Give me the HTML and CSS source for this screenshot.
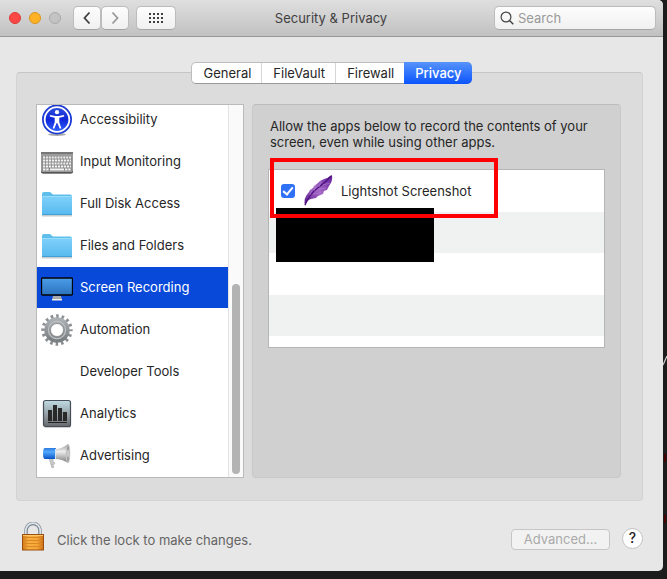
FILE: index.html
```html
<!DOCTYPE html>
<html lang="en">
<head>
    <meta charset="UTF-8">
    <meta name="viewport" content="width=device-width, initial-scale=1.0">
    <title>Security &amp; Privacy</title>
    <link rel="stylesheet" href="styles.css">
</head>
<body>
    <main class="window">
        <header class="titlebar">
            <div class="controls">
                <div class="lights">
                    <button class="light close" aria-label="Close"></button>
                    <button class="light minimize" aria-label="Minimize"></button>
                    <button class="light" aria-label="Zoom" disabled></button>
                </div>
                <div class="history">
                    <button class="tool" aria-label="Back">
                        <svg width="8" height="14" viewBox="0 0 8 14"><path d="M6.5 1.5L1.5 7l5 5.5" fill="none" stroke="#3f3f3f" stroke-width="1.8"/></svg>
                    </button>
                    <button class="tool" aria-label="Forward">
                        <svg width="8" height="14" viewBox="0 0 8 14"><path d="M1.5 1.5L6.5 7l-5 5.5" fill="none" stroke="#999" stroke-width="1.8"/></svg>
                    </button>
                </div>
                <button class="tool show-all" aria-label="Show All">
                    <svg width="14" height="10" viewBox="0 0 14 10"><path d="M0 1h14M0 5h14M0 9h14" stroke="#3f3f3f" stroke-width="2" stroke-dasharray="2 2"/></svg>
                </button>
            </div>
            <h1>Security &amp; Privacy</h1>
            <label class="search">
                <svg width="14" height="14" viewBox="0 0 14 14" fill="none" stroke="#444" stroke-width="1.2"><circle cx="6" cy="6" r="4.9"/><path d="M9.5 9.5l3.8 3.8" stroke-width="1.5"/></svg>
                <input type="text" placeholder="Search" aria-label="Search">
            </label>
        </header>

        <nav class="tabs">
            <button>General</button>
            <button>FileVault</button>
            <button>Firewall</button>
            <button class="active">Privacy</button>
        </nav>

        <section class="panel">
            <div class="sidebar">
                <ul class="services">
                    <li>
                        <svg width="32" height="32" viewBox="0 0 32 32">
                            <defs><linearGradient id="blue" x2="0" y2="1"><stop offset="0" stop-color="#2f50dc"/><stop offset=".5" stop-color="#1026d8"/><stop offset="1" stop-color="#2f63ff"/></linearGradient></defs>
                            <ellipse cx="16" cy="30.500" rx="9" ry="1.500" fill="#aaa"/>
                            <circle cx="16" cy="15.500" r="15" fill="#1c39d2"/>
                            <circle cx="16" cy="15.500" r="12.300" fill="url(#blue)" stroke="#fff" stroke-width="1.800"/>
                            <circle cx="16" cy="8.200" r="2.100" fill="#fff"/>
                            <path d="M9 11l5.200 1h3.600l5.200-1 .2 1.400-4.900 1.400v4.400l2 6-1.500.6L16.300 19h-.6l-2.500 5.800-1.500-.6 2-6v-4.400l-4.900-1.400z" fill="#fff"/>
                        </svg>
                        Accessibility
                    </li>
                    <li>
                        <svg width="32" height="32" viewBox="0 0 32 32">
                            <path d="M0 7h32v18.500q0 2-2 2H2q-2 0-2-2z" fill="#151515"/>
                            <path d="M0 6h32v18q0 2.500-1.500 2.500h-29Q0 26.500 0 24z" fill="#9c9c9c"/>
                            <path d="M0 6h32v2H0z" fill="#777"/>
                            <path d="M1 10h30v15H1z" fill="#8c8c8c"/>
                            <path d="M2 11.500h28M2 17.500h28" stroke="#f2f2f2" stroke-width="2" stroke-dasharray="2 .9"/>
                            <path d="M2 14.500h28M2 20.500h28" stroke="#f2f2f2" stroke-width="2" stroke-dasharray="2.200 .8"/>
                            <path d="M2 23.500h6M24 23.500h6" stroke="#f2f2f2" stroke-width="2" stroke-dasharray="2.400 .8"/>
                            <path d="M9 23.500h14" stroke="#f2f2f2" stroke-width="2"/>
                        </svg>
                        Input Monitoring
                    </li>
                    <li>
                        <svg width="32" height="32" viewBox="0 0 32 32">
                            <defs><linearGradient id="folder" x2="0" y2="1"><stop offset="0" stop-color="#7fd0fa"/><stop offset="1" stop-color="#57b9ee"/></linearGradient></defs>
                            <path d="M1 27h30v1.500H1z" fill="#c5cdd2"/>
                            <path d="M1 26V6q0-2 2-2h6l3 2.500h17q2 0 2 2V26z" fill="#5fbfea"/>
                            <path d="M1 8.500h30V26q0 1-1 1H2q-1 0-1-1z" fill="url(#folder)"/>
                            <path d="M1.500 8.500h29" stroke="#96dcfc"/>
                            <path d="M1 26.500h30" stroke="#42a0d3"/>
                        </svg>
                        Full Disk Access
                    </li>
                    <li>
                        <svg width="32" height="32" viewBox="0 0 32 32">
                            <path d="M1 27h30v1.500H1z" fill="#c5cdd2"/>
                            <path d="M1 26V6q0-2 2-2h6l3 2.500h17q2 0 2 2V26z" fill="#5fbfea"/>
                            <path d="M1 8.500h30V26q0 1-1 1H2q-1 0-1-1z" fill="url(#folder)"/>
                            <path d="M1.500 8.500h29" stroke="#96dcfc"/>
                            <path d="M1 26.500h30" stroke="#42a0d3"/>
                        </svg>
                        Files and Folders
                    </li>
                    <li class="selected">
                        <svg width="32" height="32" viewBox="0 0 32 32">
                            <defs><linearGradient id="screen" x2="0" y2="1"><stop offset="0" stop-color="#4b9de9"/><stop offset="1" stop-color="#2c72bd"/></linearGradient></defs>
                            <path d="M12 24h8l1 4H11z" fill="#aaa"/>
                            <path d="M11 27h10v1.500H11z" fill="#ededed"/>
                            <rect x=".5" y="6" width="31" height="17" rx="1" fill="url(#screen)" stroke="#050505" stroke-width="1.300"/>
                        </svg>
                        Screen Recording
                    </li>
                    <li>
                        <svg width="32" height="32" viewBox="0 0 32 32">
                            <defs><linearGradient id="steel" x2="0" y2="1"><stop offset="0" stop-color="#a9aeb2"/><stop offset="1" stop-color="#7b8084"/></linearGradient></defs>
                            <circle cx="16" cy="16" r="13.700" fill="none" stroke="#8b8f93" stroke-width="4" stroke-dasharray="2.500 2.880" stroke-dashoffset="1.250"/>
                            <circle cx="16" cy="16" r="9.400" fill="none" stroke="url(#steel)" stroke-width="6.600"/>
                            <circle cx="16" cy="16" r="8.600" fill="none" stroke="#bfc2c5" stroke-width="1.200"/>
                            <circle cx="16" cy="16" r="6.500" fill="#fff" stroke="#888" stroke-width=".8"/>
                        </svg>
                        Automation
                    </li>
                    <li>
                        <span class="no-icon"></span>
                        Developer Tools
                    </li>
                    <li>
                        <svg width="32" height="32" viewBox="0 0 32 32">
                            <defs><linearGradient id="chart" x2="0" y2="1"><stop offset="0" stop-color="#bfdbe3"/><stop offset=".6" stop-color="#90999e"/><stop offset="1" stop-color="#66696b"/></linearGradient></defs>
                            <rect x="3" y="4" width="27" height="26" rx="2" fill="#ccc"/>
                            <rect x="2.500" y="2.500" width="27" height="26" rx="2" fill="url(#chart)" stroke="#464d59" stroke-width="1.200"/>
                            <path d="M7 12h4v11H7zM12 7h4v16h-4zM17 10h4v13h-4zM22 14h4v9h-4z" fill="#292929"/>
                            <path d="M7 24.500h19" stroke="#222"/>
                        </svg>
                        Analytics
                    </li>
                    <li>
                        <svg width="32" height="32" viewBox="0 0 32 32">
                            <defs>
                                <linearGradient id="horn" x2="0" y2="1"><stop offset="0" stop-color="#999"/><stop offset=".4" stop-color="#eee"/><stop offset="1" stop-color="#777"/></linearGradient>
                                <linearGradient id="grip" x2="0" y2="1"><stop offset="0" stop-color="#2b79dd"/><stop offset=".35" stop-color="#54aaff"/><stop offset="1" stop-color="#0754c5"/></linearGradient>
                            </defs>
                            <path d="M8 18h4v4l2 1-1 1.500-2-.5 2 3-2 1z" fill="#ccc" stroke="#aaa" stroke-width=".7"/>
                            <path d="M14 9q7 0 13-5v19q-6-4-13-4z" fill="url(#horn)"/>
                            <path d="M4 8h11v11H4q-2 0-2-5.500T4 8z" fill="url(#grip)"/>
                            <path d="M14.500 9v10" stroke="#d6e5f5"/>
                            <ellipse cx="27" cy="13.500" rx="1.800" ry="9.500" fill="#999" stroke="#ccc"/>
                            <ellipse cx="27" cy="13.500" rx="1" ry="4" fill="#ccc"/>
                        </svg>
                        Advertising
                    </li>
                </ul>
                <div class="scrollbar"><div class="thumb"></div></div>
            </div>

            <div class="details">
                <p>Allow the apps below to record the contents of your screen, even while using other apps.</p>
                <div class="apps">
                    <label class="app">
                        <input type="checkbox" checked>
                        <svg width="32" height="32" viewBox="0 0 32 32">
                            <defs><linearGradient id="feather" x1="0" y1="1" x2="1" y2="0"><stop offset="0" stop-color="#55138a"/><stop offset=".5" stop-color="#a66ac8"/><stop offset="1" stop-color="#5d1b99"/></linearGradient></defs>
                            <path d="M3 31Q1 23 7 17l1-2 3-2 1-2 4-3 2-2 4-2q4-1 8-4 1 6-3 11l-2 4-3 1-1 3-5 2-2 2-5 1q-4 1-6 7z" fill="url(#feather)"/>
                            <path d="M3 30Q8 18 17 12 24 7 29 1" fill="none" stroke="#4b107d" stroke-width="1.200"/>
                            <path d="M8 20l2-6M12 16l2-6M17 12l2-6M11 19l7-1M16 14l8-1M21 10l7-2" stroke="#b98ad3" stroke-width=".5"/>
                        </svg>
                        <span>Lightshot Screenshot</span>
                    </label>
                    <div class="redacted"></div>
                    <div class="highlight"></div>
                </div>
            </div>
        </section>

        <footer>
            <button class="lock" aria-label="Unlock">
                <svg width="24" height="30" viewBox="0 0 24 30">
                    <defs><linearGradient id="brass"><stop offset="0" stop-color="#d37714"/><stop offset=".3" stop-color="#f8ae40"/><stop offset=".7" stop-color="#f5a637"/><stop offset="1" stop-color="#c96a12"/></linearGradient></defs>
                    <path d="M5 13V8.500a7 7 0 0 1 14 0V13" fill="none" stroke="#7c8791" stroke-width="3.600"/>
                    <path d="M4.700 13V8.500a7.300 7.300 0 0 1 14.600 0V13" fill="none" stroke="#dce4ea" stroke-width="1.800"/>
                    <rect x="1.500" y="12.500" width="21" height="15.500" fill="url(#brass)" stroke="#9a4e10"/>
                    <path d="M2 15.500h20M2 18.500h20M2 21.500h20M2 24.500h20" stroke="#d98825"/>
                    <path d="M2 13.500h20" stroke="#ffc867"/>
                </svg>
            </button>
            <span class="hint">Click the lock to make changes.</span>
            <button class="advanced" disabled>Advanced...</button>
            <button class="help" aria-label="Help">?</button>
        </footer>
    </main>

    <!-- sliver of the window behind -->
    <div class="behind">
        <svg width="4" height="200" viewBox="0 0 4 200">
            <path d="M0 10l4-9" stroke="#ccc" stroke-width="1.200"/>
            <path d="M2 99v8M2 160v8" stroke="#400" stroke-width="2"/>
        </svg>
    </div>
</body>
</html>
```
FILE: styles.css
```css
* {
    box-sizing: border-box;
}

body {
    margin: 0;
    padding-bottom: 8px;
    display: flex;
    background: #1c1c1c;
    color: #262626;
    font-family: Inter, "Liberation Sans", sans-serif;
    font-size: 13px;
    line-height: 16px;
}

button,
input {
    margin: 0;
    padding: 0;
    font: inherit;
    color: inherit;
}

svg {
    display: block;
    flex: none;
}

.window {
    flex: 1;
    background: #e7e7e7;
    border-radius: 0 5px 5px 0;
    overflow: hidden;
}

/* title bar */
.titlebar {
    display: grid;
    grid-template-columns: 1fr auto 1fr;
    align-items: center;
    height: 37px;
    padding: 0 7px 0 6px;
    background: linear-gradient(#dfdfdf, #c1c1c1);
    border-bottom: 1px solid #989898;
}

.titlebar h1 {
    margin: 0;
    font-size: 13px;
    font-weight: 400;
    color: #404040;
}

.controls,
.lights,
.history {
    display: flex;
    align-items: center;
}

.lights {
    gap: 8px;
    padding: 0 12px 0 3px;
}

.light {
    width: 12px;
    height: 12px;
    border: 1px solid #aaa;
    border-radius: 50%;
    background: #c3c3c3;
}

.close {
    background: #fc4845;
    border-color: #df3834;
}

.minimize {
    background: #fdb124;
    border-color: #dc951c;
}

.history {
    margin-right: 7px;
}

.tool {
    display: flex;
    align-items: center;
    justify-content: center;
    width: 28px;
    height: 24px;
    border: 1px solid #bcbcbc;
    border-bottom-color: #a5a5a5;
    border-radius: 5px;
    background: linear-gradient(#fdfdfd, #f0f0f0);
}

.show-all {
    width: 40px;
}

.search {
    display: flex;
    align-items: center;
    justify-self: end;
    gap: 4px;
    width: 162px;
    height: 24px;
    padding: 0 5px;
    border: 1px solid #bcbcbc;
    border-bottom-color: #a5a5a5;
    border-radius: 5px;
    background: linear-gradient(#fdfdfd, #f0f0f0);
}

.search input {
    flex: 1;
    min-width: 0;
    border: 0;
    outline: 0;
    background: none;
}

.search input::placeholder {
    color: #999;
}

/* tabs */
.tabs {
    position: relative;
    display: flex;
    width: max-content;
    margin: 25px auto -12px;
    border: 1px solid #bdbdbd;
    border-bottom-color: #999;
    border-radius: 5px;
    background: #fff;
}

.tabs button {
    height: 20px;
    padding: 0 10px 0 11px;
    border: 0;
    border-right: 1px solid #d5d5d5;
    background: none;
}

.tabs .active {
    margin: -1px;
    height: 22px;
    border: 0;
    border-radius: 0 5px 5px 0;
    background: linear-gradient(#5693fb, #0b54fd);
    color: #fff;
    font-weight: 500;
}

/* main panel */
.panel {
    display: flex;
    gap: 8px;
    margin: 0 20px 0 16px;
    padding: 31px 21px 22px 19px;
    border: 1px solid #d3d3d3;
    border-top-color: #c5c5c5;
    border-radius: 4px;
    background: #dcdcdc;
}

.sidebar {
    display: flex;
    width: 208px;
    border: 1px solid #b8bbba;
    background: #fff;
    overflow: hidden;
}

.services {
    flex: 1;
    margin: -6px 0 0;
    padding: 0;
    list-style: none;
}

.services li {
    display: flex;
    align-items: center;
    gap: 7px;
    height: 42px;
    padding: 0 4px 2px;
    border-bottom: 1px solid #fff;
    white-space: nowrap;
}

.services .selected {
    background: #0849d9;
    background-clip: padding-box;
    color: #fff;
}

.services svg {
    margin-top: 2px;
}

.no-icon {
    width: 32px;
}

.scrollbar {
    display: flex;
    align-items: flex-end;
    width: 15px;
    padding: 3px;
    border-left: 1px solid #e3e3e3;
    background: #fafafa;
}

.thumb {
    width: 8px;
    height: 52%;
    border-radius: 4px;
    background: #b3b3b3;
}

.details {
    flex: 1;
    padding: 13px 15px;
    border: 1px solid #c8c8c8;
    border-top-color: #bcbcbc;
    border-radius: 4px;
    background: #d0d0d0;
}

.details p {
    margin: 0 2px 19px;
}

.apps {
    position: relative;
    height: 179px;
    border: 1px solid #b5b5b5;
    background: repeating-linear-gradient(#fff 0 42px, #f0f2f1 42px 83px);
}

.app {
    display: flex;
    align-items: center;
    height: 42px;
    padding-left: 12px;
}

.app input {
    appearance: none;
    display: grid;
    place-items: center;
    width: 14px;
    height: 14px;
    margin-right: 7px;
    border-radius: 3px;
    background: #2f72f7;
}

.app input::after {
    content: "";
    width: 4px;
    height: 8px;
    margin-bottom: 2px;
    border: solid #fff;
    border-width: 0 2px 2px 0;
    transform: rotate(40deg);
}

.app span {
    margin-left: 7px;
}

.redacted {
    position: absolute;
    top: 38px;
    left: 7px;
    width: 158px;
    height: 54px;
    background: #000;
}

.highlight {
    position: absolute;
    top: -12px;
    left: 1px;
    width: 228px;
    height: 60px;
    border: 4px solid #fe0000;
}

/* footer */
footer {
    display: flex;
    align-items: center;
    padding: 21px 20px 19px 21px;
}

.lock {
    border: 0;
    background: none;
}

.hint {
    margin: 6px auto 0 12px;
    color: #656565;
}

.advanced {
    width: 99px;
    height: 21px;
    margin: 4px 12px 0 0;
    border: 1px solid #c6c6c6;
    border-radius: 4px;
    background: #f2f2f2;
    color: #aaa;
}

.help {
    width: 21px;
    height: 21px;
    margin-top: 2px;
    border: 1px solid #c2c2c2;
    border-radius: 50%;
    background: #fff;
    font-size: 14px;
    font-weight: 500;
}

.behind {
    width: 4px;
    padding-top: 355px;
}
```
